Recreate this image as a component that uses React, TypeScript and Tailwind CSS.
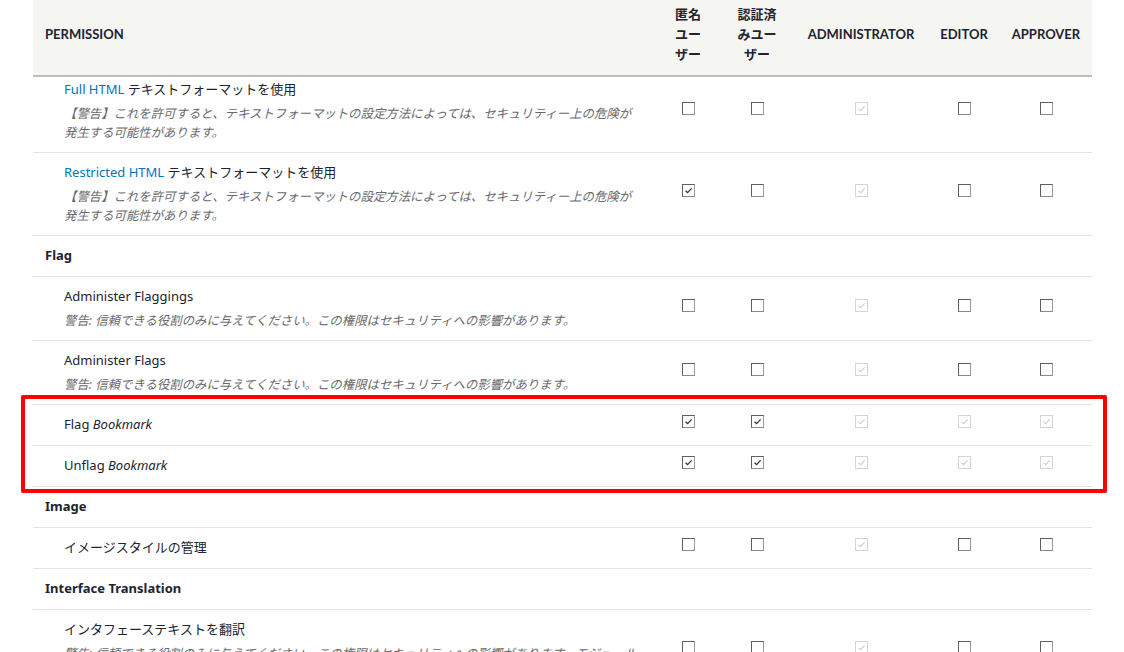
import type { ReactNode } from "react"

type Mark = "empty" | "checked" | "locked"

const cols = "grid grid-cols-[623px_64px_74px_134px_72px_92px]"
const body = { fontFamily: "'Noto Sans', 'Noto Sans CJK JP', sans-serif" }

function Box({ mark }: { mark: Mark }) {
    if (mark === "locked") {
        return (
            <span className="flex h-[13px] w-[13px] items-center justify-center border border-[#d4d4d4] bg-white">
                <svg width="9" height="9" viewBox="0 0 9 9" fill="none">
                    <path d="M1.5 4.8 L3.6 6.6 L7.6 2.4" stroke="#c9c9c9" strokeWidth="1.1" />
                </svg>
            </span>
        )
    }
    return (
        <span className="flex h-[13px] w-[13px] items-center justify-center border border-[#5f5f5f] border-r-[#9a9a9a] border-b-[#8a8a8a] bg-white">
            {mark === "checked" && (
                <svg width="9" height="9" viewBox="0 0 9 9" fill="none">
                    <path d="M1.5 4.8 L3.6 6.6 L7.6 2.4" stroke="#333" strokeWidth="1.3" />
                </svg>
            )}
        </span>
    )
}

function Category({ title }: { title: string }) {
    return (
        <div
            className="border-b border-[#e6e4df] px-3 pt-[9px] pb-[11px] text-[13px] leading-5 font-bold text-[#222330]"
            style={body}
        >
            {title}
        </div>
    )
}

function PermRow({
    title,
    desc,
    marks,
    first,
}: {
    title: ReactNode
    desc?: string
    marks: Mark[]
    first?: boolean
}) {
    return (
        <div className={`${cols} border-b border-[#e6e4df]`} style={body}>
            <div
                className={`pl-[31px] pr-3 ${first ? "pt-[2px]" : "pt-[9px]"} ${desc ? "pb-[10px]" : "pb-[11px]"}`}
            >
                <div className="text-[13px] leading-5 text-[#222330]">{title}</div>
                {desc && (
                    <div className="mt-[5px] max-w-[575px] text-[12.4px] leading-[19px] text-[#68696c] italic">
                        {desc}
                    </div>
                )}
            </div>
            {marks.map((m, i) => (
                <div
                    key={i}
                    className={`flex items-center justify-center ${first ? "pb-[13px]" : "pb-[7px]"}`}
                >
                    <Box mark={m} />
                </div>
            ))}
        </div>
    )
}

const textWarn =
    "【警告】これを許可すると、テキストフォーマットの設定方法によっては、セキュリティー上の危険が発生する可能性があります。"
const trustWarn = "警告: 信頼できる役割のみに与えてください。この権限はセキュリティへの影響があります。"

export default function App() {
    return (
        <div
            className="relative h-[652px] overflow-hidden bg-white"
            style={{ fontFamily: "Lato, 'Noto Sans CJK JP', sans-serif" }}
        >
            <div className="ml-[33px] w-[1059px]">
                <div
                    className={`${cols} items-center border-b-2 border-[#bfbeb8] bg-[#f5f5f2] pt-[4px] pb-[11px] text-[13px] leading-5 font-bold text-[#222330]`}
                >
                    <div className="px-3">PERMISSION</div>
                    <div className="text-center">
                        匿名<br />ユー<br />ザー
                    </div>
                    <div className="text-center">
                        認証済<br />みユー<br />ザー
                    </div>
                    <div className="text-center">ADMINISTRATOR</div>
                    <div className="text-center">EDITOR</div>
                    <div className="text-center">APPROVER</div>
                </div>

                <PermRow
                    first
                    title={
                        <>
                            <span className="text-[#0074bd]">Full HTML</span> テキストフォーマットを使用
                        </>
                    }
                    desc={textWarn}
                    marks={["empty", "empty", "locked", "empty", "empty"]}
                />
                <PermRow
                    title={
                        <>
                            <span className="text-[#0074bd]">Restricted HTML</span> テキストフォーマットを使用
                        </>
                    }
                    desc={textWarn}
                    marks={["checked", "empty", "locked", "empty", "empty"]}
                />

                <Category title="Flag" />
                <PermRow
                    title="Administer Flaggings"
                    desc={trustWarn}
                    marks={["empty", "empty", "locked", "empty", "empty"]}
                />
                <PermRow
                    title="Administer Flags"
                    desc={trustWarn}
                    marks={["empty", "empty", "locked", "empty", "empty"]}
                />
                <PermRow
                    title={
                        <>
                            Flag <em>Bookmark</em>
                        </>
                    }
                    marks={["checked", "checked", "locked", "locked", "locked"]}
                />
                <PermRow
                    title={
                        <>
                            Unflag <em>Bookmark</em>
                        </>
                    }
                    marks={["checked", "checked", "locked", "locked", "locked"]}
                />

                <Category title="Image" />
                <PermRow title="イメージスタイルの管理" marks={["empty", "empty", "locked", "empty", "empty"]} />

                <Category title="Interface Translation" />
                <PermRow
                    title="インタフェーステキストを翻訳"
                    desc={trustWarn + "モジュールのインタフェーステキストの翻訳も可能になります。"}
                    marks={["empty", "empty", "locked", "empty", "empty"]}
                />
            </div>

            {/* highlight around the bookmark rows */}
            <div className="absolute top-[395px] left-[21px] h-[98px] w-[1086px] rounded-[2px] border-4 border-[#ff0000]" />
        </div>
    )
}
